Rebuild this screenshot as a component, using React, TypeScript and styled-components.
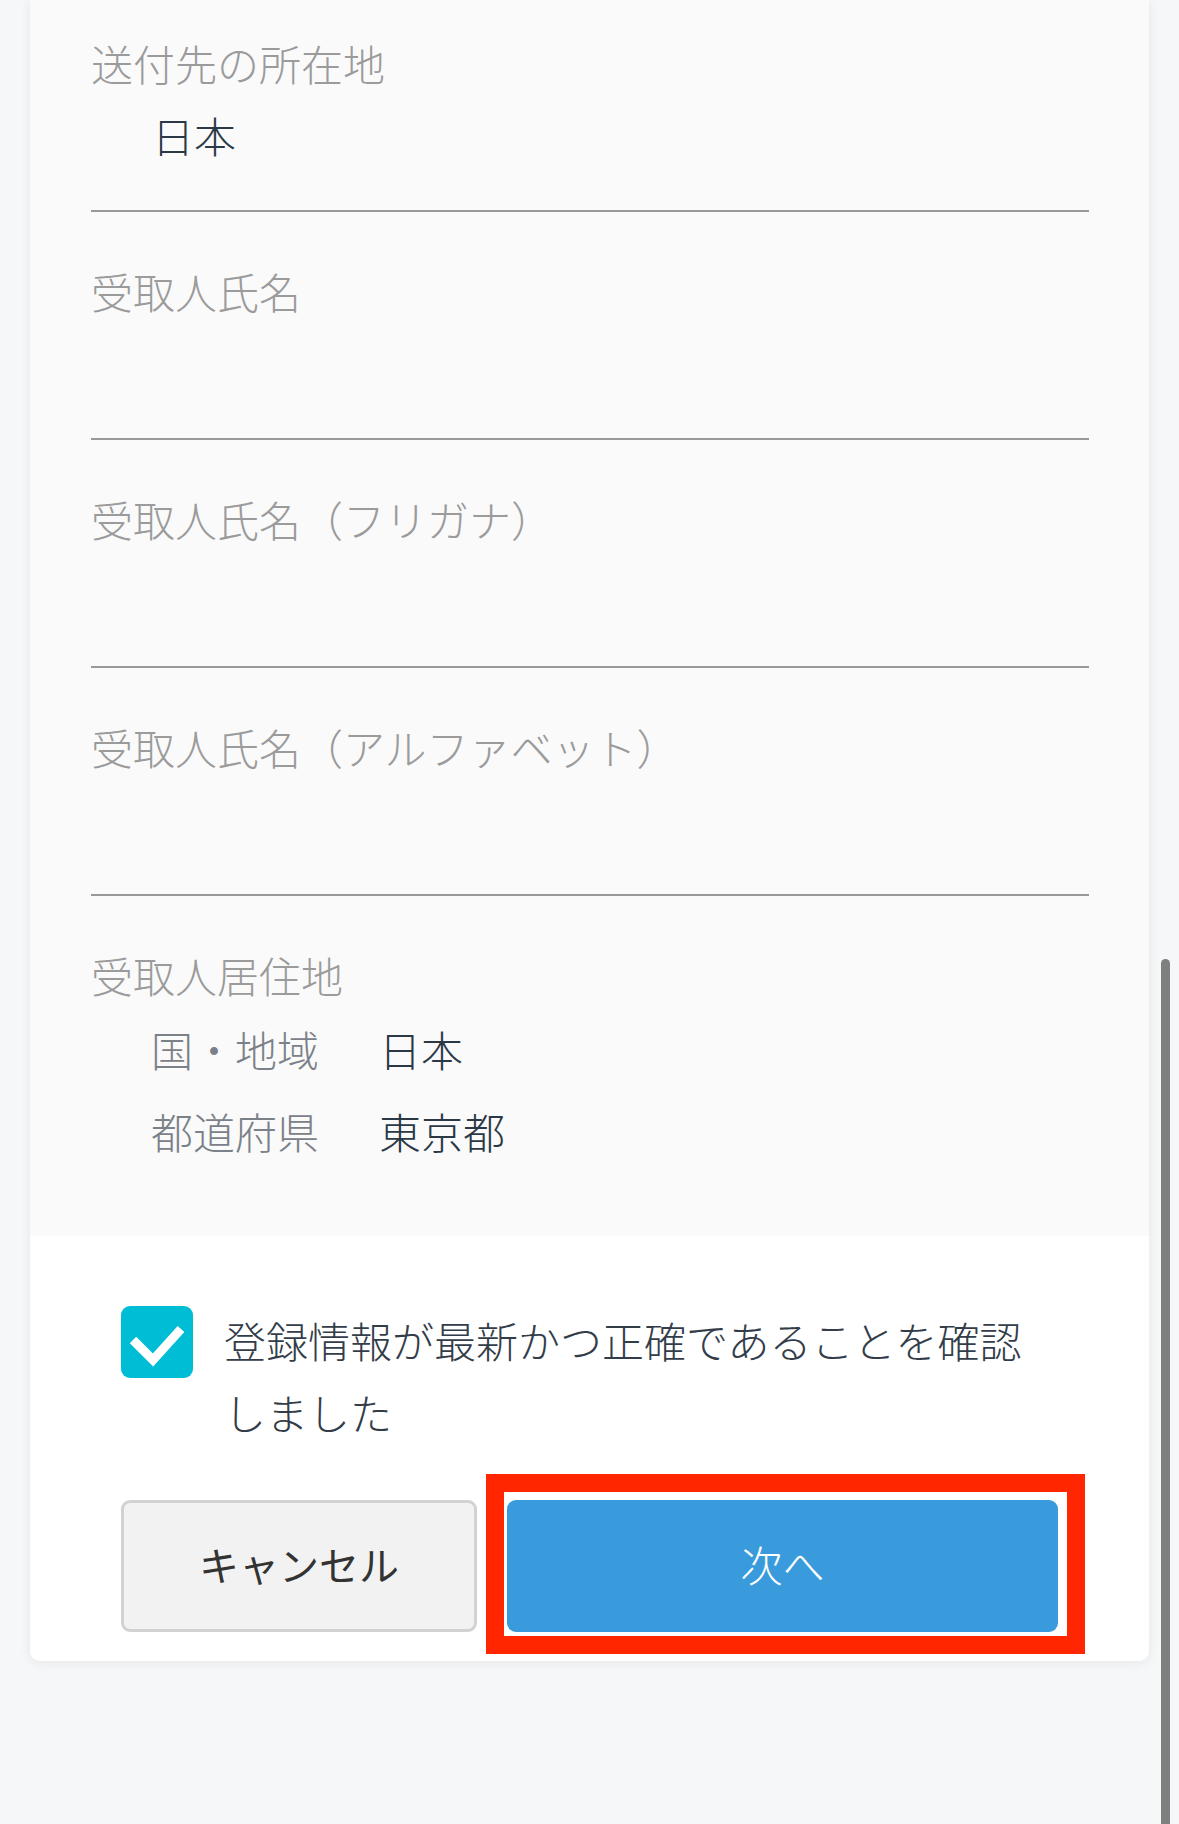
import React from 'react'
import styled, { createGlobalStyle } from 'styled-components'

const GlobalStyle = createGlobalStyle`
  html, body {
    margin: 0;
    padding: 0;
    background: #f6f7f9;
  }
  body {
    font-family: "Noto Sans CJK JP", "Noto Sans", sans-serif;
  }
`

type Field = { label: string; value?: string }

const fields: Field[] = [
  { label: '送付先の所在地', value: '日本' },
  { label: '受取人氏名' },
  { label: '受取人氏名（フリガナ）' },
  { label: '受取人氏名（アルファベット）' },
]

const residence = [
  { label: '国・地域', value: '日本' },
  { label: '都道府県', value: '東京都' },
]

function CheckIcon() {
  return (
    <svg width="72" height="72" viewBox="0 0 72 72">
      <polyline
        points="12,34 32,54 60,23"
        fill="none"
        stroke="#ffffff"
        strokeWidth="9"
      />
    </svg>
  )
}

function FieldBlock({ field }: { field: Field }) {
  return (
    <StyledField>
      <Label>{field.label}</Label>
      <Value>{field.value ?? ''}</Value>
    </StyledField>
  )
}

function Residence() {
  return (
    <StyledResidence>
      <Label>受取人居住地</Label>
      <SubRows>
        {residence.map((row) => (
          <SubRow key={row.label}>
            <SubLabel>{row.label}</SubLabel>
            <SubValue>{row.value}</SubValue>
          </SubRow>
        ))}
      </SubRows>
    </StyledResidence>
  )
}

function Confirm() {
  return (
    <StyledConfirm>
      <CheckBox>
        <CheckIcon />
      </CheckBox>
      <ConfirmText>登録情報が最新かつ正確であることを確認しました</ConfirmText>
    </StyledConfirm>
  )
}

function Actions() {
  return (
    <StyledActions>
      <CancelButton>キャンセル</CancelButton>
      <NextWrap>
        <NextButton>次へ</NextButton>
        <Highlight />
      </NextWrap>
    </StyledActions>
  )
}

export default function App() {
  return (
    <Page>
      <GlobalStyle />
      <Card>
        <InfoSection>
          {fields.map((f) => (
            <FieldBlock key={f.label} field={f} />
          ))}
          <Residence />
        </InfoSection>
        <ActionSection>
          <Confirm />
          <Actions />
        </ActionSection>
      </Card>
      <ScrollIndicator />
    </Page>
  )
}

const Page = styled.div`
  position: relative;
  min-height: 1824px;
  padding: 0 30px;
  background: #f6f7f9;
  box-sizing: border-box;
`

const Card = styled.div`
  background: #ffffff;
  border-radius: 0 0 10px 10px;
  box-shadow: 0 2px 12px rgba(0, 0, 0, 0.07);
  overflow: hidden;
`

const InfoSection = styled.div`
  background: #fafafa;
  padding: 33px 60px 75px 61px;
`

const StyledField = styled.div`
  padding: 49px 0 45px;
  border-bottom: 2px solid #999999;

  &:first-child {
    padding-top: 0;
  }
`

const Label = styled.div`
  font-size: 42px;
  font-weight: 300;
  line-height: 60px;
  height: 60px;
  color: #9b9b9b;
  white-space: nowrap;
`

const Value = styled.div`
  margin-top: 12px;
  padding-left: 61px;
  font-size: 42px;
  font-weight: 300;
  line-height: 60px;
  height: 60px;
  color: #2b3846;
`

const StyledResidence = styled.div`
  padding-top: 49px;
`

const SubRows = styled.div`
  margin-top: 14px;
  padding-left: 60px;
  display: flex;
  flex-direction: column;
  gap: 22px;
`

const SubRow = styled.div`
  display: grid;
  grid-template-columns: 228px 1fr;
  font-size: 42px;
  font-weight: 300;
  line-height: 60px;
`

const SubLabel = styled.div`
  color: #7b8189;
`

const SubValue = styled.div`
  color: #2b3846;
`

const ActionSection = styled.div`
  background: #ffffff;
  padding: 70px 91px 29px;
`

const StyledConfirm = styled.div`
  display: flex;
  align-items: flex-start;
  gap: 31px;
`

const CheckBox = styled.div`
  flex: 0 0 72px;
  width: 72px;
  height: 72px;
  border-radius: 9px;
  background: #00bdd6;
  display: flex;
`

const ConfirmText = styled.div`
  flex: 1;
  margin-top: -2px;
  font-size: 42px;
  font-weight: 300;
  line-height: 72px;
  color: #333d4a;
`

const StyledActions = styled.div`
  margin-top: 52px;
  display: grid;
  grid-template-columns: 356px 1fr;
  gap: 30px;
  height: 132px;
`

const CancelButton = styled.button`
  font-family: inherit;
  font-size: 40px;
  color: #333333;
  background: #f2f2f2;
  border: 3px solid #d2d2d2;
  border-radius: 9px;
  padding: 0 0 5px;
`

const NextWrap = styled.div`
  position: relative;
  display: flex;
`

const NextButton = styled.button`
  flex: 1;
  font-family: inherit;
  font-size: 42px;
  font-weight: 300;
  color: #ffffff;
  background: #3a9bdc;
  border: none;
  border-radius: 9px;
  padding: 0 0 5px;
`

const Highlight = styled.div`
  position: absolute;
  top: -26px;
  left: -21px;
  right: -27px;
  bottom: -22px;
  border: 18px solid #ff2600;
  pointer-events: none;
`

const ScrollIndicator = styled.div`
  position: absolute;
  top: 959px;
  bottom: 0;
  left: 1161px;
  width: 9px;
  border-radius: 5px 5px 0 0;
  background: #7f7f80;
`
